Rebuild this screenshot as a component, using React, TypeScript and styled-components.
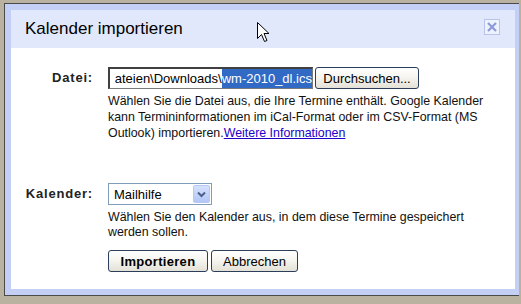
import React from "react";
import styled, { createGlobalStyle } from "styled-components";

const Global = createGlobalStyle`
  html, body { margin: 0; padding: 0; }
  body {
    background: #b9b2a0;
    font-family: "Liberation Sans", Arial, sans-serif;
    width: 521px;
    height: 304px;
    overflow: hidden;
  }
`;

const Page = styled.div`
  padding: 3px 0 0 4px;
  position: relative;
`;

const Dialog = styled.div`
  width: 515px;
  height: 293px;
  border: 1px solid #4a4a4a;
  border-right: none;
  background: #c3cff5;
  padding: 6px 4px 6px 6px;
  box-sizing: border-box;
  display: flex;
`;

const Inner = styled.div`
  flex: 1;
  background: #fff;
  display: flex;
  flex-direction: column;
`;

const Header = styled.div`
  height: 38px;
  background: #e1e8fb;
  display: flex;
  align-items: center;
  justify-content: space-between;
  padding: 0 15px 0 14px;
`;

const Title = styled.h1`
  margin: 0;
  font-size: 17px;
  font-weight: normal;
  color: #000;
  padding-bottom: 1px;
`;

const Close = styled.div`
  width: 14px;
  height: 14px;
  border: 1px solid #b9c4ec;
  background: #eef2fd;
  display: flex;
  align-items: center;
  justify-content: center;
  margin-top: -4px;
`;

const Body = styled.div`
  padding: 19px 0 0 0;
  display: grid;
  grid-template-columns: 82px auto;
  column-gap: 15px;
  align-content: start;
`;

const Label = styled.div<{ $top?: number }>`
  font-weight: bold;
  font-size: 13px;
  text-align: right;
  color: #222;
  padding-top: 3px;
  margin-top: ${(p) => p.$top ?? 0}px;
  letter-spacing: 0.8px;
`;

const Field = styled.div<{ $top?: number }>`
  display: flex;
  flex-direction: column;
  margin-top: ${(p) => p.$top ?? 0}px;
`;

const Line = styled.div`
  display: flex;
  align-items: center;
  gap: 2px;
`;

const FileBox = styled.div`
  width: 205px;
  height: 22px;
  box-sizing: border-box;
  border: 1px solid #7a7a7a;
  border-top: 2px solid #404040;
  border-left: 2px solid #404040;
  display: flex;
  justify-content: flex-end;
  align-items: center;
  overflow: hidden;
  white-space: nowrap;
  font-size: 13px;
  color: #000;
`;

const Sel = styled.span`
  background: #316ac5;
  color: #fff;
  padding: 2px 0;
`;

const XPButton = styled.button<{ $bold?: boolean; $w: number }>`
  width: ${(p) => p.$w}px;
  height: 22px;
  box-sizing: border-box;
  border: 1px solid #2b3e5a;
  border-radius: 3px;
  background: linear-gradient(#ffffff 0%, #f6f5f0 45%, #e3e1d7 100%);
  font-family: "Liberation Sans", Arial, sans-serif;
  font-size: 13px;
  font-weight: ${(p) => (p.$bold ? "bold" : "normal")};
  color: #000;
  padding: 0;
  letter-spacing: ${(p) => (p.$bold ? "0.3px" : "0")};
`;

const Desc = styled.p<{ $lh: number; $mt: number }>`
  margin: ${(p) => p.$mt}px 0 0 0;
  width: 385px;
  font-size: 12.4px;
  line-height: ${(p) => p.$lh}px;
  color: #111;
`;

const Link = styled.a`
  color: #2200cc;
  text-decoration: underline;
`;

const Select = styled.div`
  width: 104px;
  height: 22px;
  box-sizing: border-box;
  border: 1px solid #7f9db9;
  display: flex;
  align-items: center;
  justify-content: space-between;
  font-size: 13px;
  color: #000;
  padding: 1px 1px 1px 5px;
`;

const DropBtn = styled.div`
  width: 17px;
  height: 18px;
  box-sizing: border-box;
  border: 1px solid #b6c8f6;
  border-radius: 2px;
  background: linear-gradient(#d6e1fd, #b2c6f6);
  display: flex;
  align-items: center;
  justify-content: center;
`;

const Buttons = styled.div`
  display: flex;
  gap: 3px;
  margin-top: 10px;
`;

const Cursor = styled.svg`
  position: absolute;
  left: 257px;
  top: 22px;
`;

export default function App() {
  return (
    <>
      <Global />
      <Page>
        <Dialog>
          <Inner>
            <Header>
              <Title>Kalender importieren</Title>
              <Close>
                <svg width="10" height="10" viewBox="0 0 10 10">
                  <path d="M1 1L9 9M9 1L1 9" stroke="#8d9ad9" strokeWidth="2.2" />
                </svg>
              </Close>
            </Header>
            <Body>
              <Label>Datei:</Label>
              <Field>
                <Line>
                  <FileBox>
                    <span>ateien\Downloads\</span>
                    <Sel>wm-2010_dl.ics</Sel>
                  </FileBox>
                  <XPButton $w={104}>Durchsuchen...</XPButton>
                </Line>
                <Desc $lh={16} $mt={4}>
                  Wählen Sie die Datei aus, die Ihre Termine enthält. Google Kalender kann
                  Termininformationen im iCal-Format oder im CSV-Format (MS Outlook)
                  importieren.<Link href="#">Weitere Informationen</Link>
                </Desc>
              </Field>
              <Label $top={42}>Kalender:</Label>
              <Field $top={42}>
                <Line>
                  <Select>
                    <span>Mailhilfe</span>
                    <DropBtn>
                      <svg width="9" height="7" viewBox="0 0 9 7">
                        <path d="M1 1.5L4.5 5L8 1.5" stroke="#4d5f8a" strokeWidth="2" fill="none" />
                      </svg>
                    </DropBtn>
                  </Select>
                </Line>
                <Desc $lh={15} $mt={5}>
                  Wählen Sie den Kalender aus, in dem diese Termine gespeichert werden sollen.
                </Desc>
                <Buttons>
                  <XPButton $bold $w={100}>Importieren</XPButton>
                  <XPButton $w={87}>Abbrechen</XPButton>
                </Buttons>
              </Field>
            </Body>
          </Inner>
        </Dialog>
        <Cursor width="13" height="21" viewBox="0 0 13 21">
          <path
            d="M0.5 0.5L0.5 16.5L4.5 12.5L7.5 19.5L10 18.5L7 11.5L12 11.5Z"
            fill="#fff"
            stroke="#000"
            strokeWidth="1"
          />
        </Cursor>
      </Page>
    </>
  );
}
